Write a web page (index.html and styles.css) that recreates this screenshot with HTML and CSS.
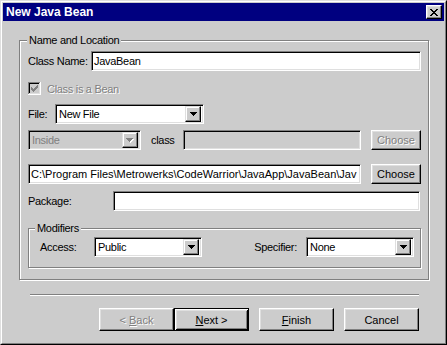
FILE: index.html
```html
<!DOCTYPE html>
<html lang="en">
<head>
  <meta charset="UTF-8" />
  <title>New Java Bean</title>
  <link rel="stylesheet" href="styles.css">
</head>
<body>
  <div class="window">
    <div class="frame">
      <!-- TITLE BAR -->
      <div class="titlebar">
        <span class="title">New Java Bean</span>
        <span class="close">
          <svg width="8" height="7" viewBox="0 0 8 7"><path fill="#000" d="M0 0h2v1H0zM6 0h2v1H6zM1 1h2v1H1zM5 1h2v1H5zM2 2h4v1H2zM3 3h2v1H3zM2 4h4v1H2zM1 5h2v1H1zM5 5h2v1H5zM0 6h2v1H0zM6 6h2v1H6z"/></svg>
        </span>
      </div>

      <div class="content">
        <!-- NAME AND LOCATION -->
        <fieldset class="group main">
          <legend>Name and Location</legend>

          <div class="row row-name">
            <span class="label w-name">Class Name:</span>
            <div class="field grow">JavaBean</div>
          </div>

          <div class="row row-check">
            <svg class="check" width="13" height="13" viewBox="0 0 13 13">
              <rect width="13" height="13" fill="#fff"/>
              <rect width="12" height="12" fill="#808080"/>
              <rect x="1" y="1" width="11" height="11" fill="#dfdfdf"/>
              <rect x="1" y="1" width="10" height="10" fill="#000"/>
              <rect x="2" y="2" width="9" height="9" fill="#cccccc"/>
              <path fill="#808080" d="M3 5h1v3H3zM4 6h1v3H4zM5 7h1v3H5zM6 6h1v3H6zM7 5h1v3H7zM8 4h1v3H8zM9 3h1v3H9z"/>
            </svg>
            <span class="label disabled">Class is a Bean</span>
          </div>

          <div class="row row-file">
            <span class="label w-file">File:</span>
            <div class="combo w-filecombo">
              <span class="value">New File</span>
              <span class="arrow"><svg width="7" height="4" viewBox="0 0 7 4"><path fill="#000" d="M0 0h7v1H0zM1 1h5v1H1zM2 2h3v1H2zM3 3h1v1H3z"/></svg></span>
            </div>
          </div>

          <div class="row row-inside">
            <div class="combo off w-inside">
              <span class="value">Inside</span>
              <span class="arrow"><svg width="8" height="5" viewBox="0 0 8 5"><path fill="#fff" d="M1 1h7v1H1zM2 2h5v1H2zM3 3h3v1H3zM4 4h1v1H4z"/><path fill="#808080" d="M0 0h7v1H0zM1 1h5v1H1zM2 2h3v1H2zM3 3h1v1H3z"/></svg></span>
            </div>
            <span class="label w-class">class</span>
            <div class="field off grow"></div>
            <button class="btn small disabled">Choose</button>
          </div>

          <div class="row row-path">
            <div class="field grow path">C:\Program Files\Metrowerks\CodeWarrior\JavaApp\JavaBean\Jav</div>
            <button class="btn small">Choose</button>
          </div>

          <div class="row row-pkg">
            <span class="label w-pkg">Package:</span>
            <div class="field grow pkg"></div>
          </div>

          <!-- MODIFIERS -->
          <fieldset class="group mods">
            <legend>Modifiers</legend>
            <div class="row">
              <span class="label w-access">Access:</span>
              <div class="combo w-mod">
                <span class="value">Public</span>
                <span class="arrow"><svg width="7" height="4" viewBox="0 0 7 4"><path fill="#000" d="M0 0h7v1H0zM1 1h5v1H1zM2 2h3v1H2zM3 3h1v1H3z"/></svg></span>
              </div>
              <span class="label spec">Specifier:</span>
              <div class="combo w-mod">
                <span class="value">None</span>
                <span class="arrow"><svg width="7" height="4" viewBox="0 0 7 4"><path fill="#000" d="M0 0h7v1H0zM1 1h5v1H1zM2 2h3v1H2zM3 3h1v1H3z"/></svg></span>
              </div>
            </div>
          </fieldset>
        </fieldset>

        <div class="separator"></div>

        <!-- WIZARD BUTTONS -->
        <div class="buttons">
          <button class="btn disabled">&lt; <u>B</u>ack</button>
          <button class="btn default"><u>N</u>ext &gt;</button>
          <button class="btn gap"><u>F</u>inish</button>
          <button class="btn gap">Cancel</button>
        </div>
      </div>
    </div>
  </div>
</body>
</html>
```

FILE: styles.css
```css
:root {
  --face: #cccccc;
  --shadow: #808080;
  --light: #dfdfdf;
  --hilite: #ffffff;
  --dark: #000000;
  --title: #000080;
  --gray-text: #808080;
}

* {
  box-sizing: border-box;
}

body {
  margin: 0;
  background: var(--face);
  font-family: 'Liberation Sans', Arial, sans-serif;
  font-size: 11px;
  letter-spacing: -0.3px;
  color: #000;
}

.window {
  width: 447px;
  height: 345px;
  border: 1px solid;
  border-color: var(--light) var(--dark) var(--dark) var(--light);
}

.frame {
  height: 100%;
  padding: 1px;
  border: 1px solid;
  border-color: var(--hilite) var(--shadow) var(--shadow) var(--hilite);
}

/* title bar */
.titlebar {
  height: 18px;
  background: var(--title);
  color: #fff;
  display: flex;
  align-items: center;
  justify-content: space-between;
  padding: 0 2px 0 3px;
}

.title {
  font-weight: bold;
  font-size: 12px;
  letter-spacing: 0;
}

.close {
  width: 16px;
  height: 14px;
  display: flex;
  align-items: center;
  justify-content: center;
  background: var(--face);
  border: 1px solid;
  border-color: var(--hilite) var(--dark) var(--dark) var(--hilite);
  box-shadow: inset -1px -1px var(--shadow), inset 1px 1px var(--light);
}

.content {
  padding: 13px 15px 0 16px;
}

/* group boxes */
.group {
  margin: 0;
  min-width: 0;
  border: 1px solid var(--shadow);
  box-shadow: inset 1px 1px var(--hilite), 1px 1px var(--hilite);
}

.group legend {
  line-height: 13px;
  padding: 0 2px;
  background: var(--face);
}

.main {
  padding: 4px 7px 11px 8px;
}

.main > legend {
  margin-left: -1px;
}

.mods {
  margin-top: 11px;
  padding: 2px 6px 10px 11px;
}

.mods > legend {
  margin-left: -5px;
}

.row {
  display: flex;
  align-items: center;
  height: 20px;
}

.row-check {
  height: 13px;
  margin-top: 11px;
}

.row-file {
  margin-top: 9px;
}

.row-inside {
  margin-top: 6px;
}

.row-path {
  margin-top: 14px;
}

.row-pkg {
  margin-top: 7px;
}

.label {
  white-space: nowrap;
  flex-shrink: 0;
}

.w-name { width: 63px; }
.w-file { width: 27px; }
.w-class { width: 32px; margin-left: 10px; }
.w-pkg { width: 85px; }
.w-access { width: 54px; }

.spec {
  margin-left: auto;
  margin-right: 9px;
}

.disabled {
  color: var(--gray-text);
  text-shadow: 1px 1px var(--hilite);
}

.check {
  margin-right: 6px;
  flex-shrink: 0;
}

/* sunken fields */
.field,
.combo {
  height: 20px;
  background: #fff;
  border: 1px solid;
  border-color: var(--shadow) var(--hilite) var(--hilite) var(--shadow);
  box-shadow: inset 1px 1px var(--dark), inset -1px -1px var(--light);
  white-space: nowrap;
  overflow: hidden;
  line-height: 18px;
  padding-left: 2px;
}

.field.path {
  letter-spacing: 0;
}

.field.off,
.combo.off {
  background: var(--face);
  color: var(--gray-text);
}

.grow {
  flex: 1;
  min-width: 0;
}

.pkg {
  margin-right: 1px;
}

.combo {
  display: flex;
  align-items: center;
  padding: 2px;
}

.combo .value {
  flex: 1;
  padding-left: 1px;
}

.combo .arrow {
  width: 16px;
  height: 16px;
  display: flex;
  align-items: center;
  justify-content: center;
  background: var(--face);
  border: 1px solid;
  border-color: var(--light) var(--dark) var(--dark) var(--light);
  box-shadow: inset -1px -1px var(--shadow), inset 1px 1px var(--hilite);
}

.w-filecombo { width: 149px; }
.w-inside { width: 113px; }
.w-mod { width: 108px; }

/* buttons */
.btn {
  font: inherit;
  color: #000;
  width: 75px;
  height: 23px;
  padding: 0;
  background: var(--face);
  border: 1px solid;
  border-color: var(--hilite) var(--dark) var(--dark) var(--hilite);
  box-shadow: inset -1px -1px var(--shadow), inset 1px 1px var(--light);
}

.btn.small {
  width: 50px;
  height: 20px;
  margin-left: 10px;
  flex-shrink: 0;
}

.btn.disabled {
  color: var(--gray-text);
  text-shadow: 1px 1px var(--hilite);
}

.btn.default {
  border-color: var(--dark);
  box-shadow: inset 1px 1px var(--hilite), inset -1px -1px var(--dark), inset 2px 2px var(--light), inset -2px -2px var(--shadow);
}

.btn.gap {
  margin-left: 10px;
}

.separator {
  margin: 14px 10px 0 11px;
  height: 2px;
  border-top: 1px solid var(--shadow);
  border-bottom: 1px solid var(--hilite);
}

.buttons {
  display: flex;
  justify-content: flex-end;
  margin-top: 12px;
  padding-right: 10px;
}
```
